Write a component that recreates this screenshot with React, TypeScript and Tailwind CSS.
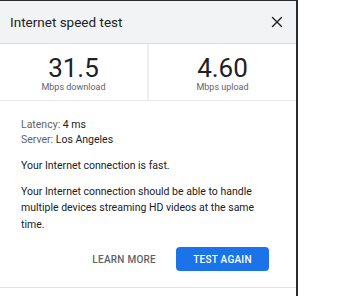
import { X } from "lucide-react";

const Stat = ({ value, label }: { value: string; label: string }) => (
  <div className="flex-1 flex flex-col items-center pt-[9.5px]">
    <span className="text-[26px] leading-[28px] text-[#202124]">{value}</span>
    <span className="text-[9px] leading-[10px] text-[#5f6368]">{label}</span>
  </div>
);

export default function App() {
  return (
    <div className="w-[341px] h-[296px] bg-white font-['Roboto',sans-serif]">
      <div className="w-[298px] h-[296px] border-r-2 border-t border-[#2b2b2b] flex flex-col">
        <header className="h-[43px] bg-[#f1f3f4] border-b border-[#dadce0] flex items-center justify-between pl-[10px] pr-[10px]">
          <span className="text-[13.5px] text-[#202124]">Internet speed test</span>
          <button className="text-[#202124]">
            <X size={18} strokeWidth={1.8} />
          </button>
        </header>

        <div className="h-[57px] flex border-b border-[#e8eaed]">
          <Stat value="31.5" label="Mbps download" />
          <div className="w-[2px] bg-[#eeeeee]" />
          <Stat value="4.60" label="Mbps upload" />
        </div>

        <div className="flex flex-col pl-[21px] pr-[30px] pt-[16px] pb-[16px] border-b border-[#e0e0e0] text-[10.5px] text-[#202124]">
          <div className="leading-[15px]">
            <p>
              <span className="text-[#5f6368]">Latency: </span>4 ms
            </p>
            <p>
              <span className="text-[#5f6368]">Server: </span>Los Angeles
            </p>
          </div>
          <p className="mt-[11px] leading-[16px]">Your Internet connection is fast.</p>
          <p className="mt-[9.5px] leading-[16.5px]">
            Your Internet connection should be able to handle multiple devices streaming HD videos at the same time.
          </p>
          <div className="mt-[14px] -mr-[9px] flex items-center justify-end gap-[20px] pr-[6px]">
            <button className="text-[10px] font-medium text-[#5f6368] tracking-[0.25px]">LEARN MORE</button>
            <button className="h-[24px] w-[93px] rounded-[4px] bg-[#1a73e8] text-white text-[10px] font-medium tracking-[0.25px]">
              TEST AGAIN
            </button>
          </div>
        </div>
      </div>
    </div>
  );
}
